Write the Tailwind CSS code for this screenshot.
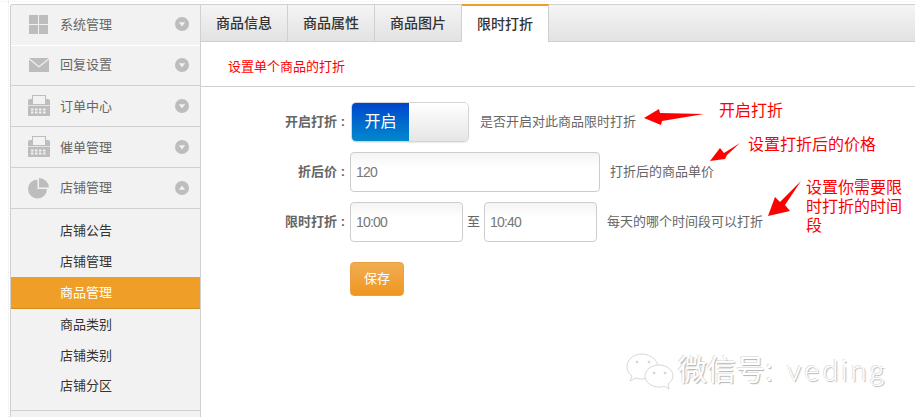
<!DOCTYPE html>
<html lang="zh-CN">
<head>
    <meta charset="UTF-8">
    <title>限时打折</title>
    <script src="https://cdn.jsdelivr.net/npm/@tailwindcss/browser@4"></script>
</head>
<body class="w-[915px] h-[417px] overflow-hidden bg-white font-['Liberation_Sans','Noto_Sans_CJK_SC',sans-serif]">
    <div class="relative flex h-[417px] pl-[10px] pt-[4px]">
        <!-- 背景虚线 -->
        <div class="absolute left-[8px] top-0 bottom-0 border-l border-dotted border-[#eaeaea]"></div>
        <div class="absolute left-0 right-0 top-[1px] border-t border-dotted border-[#eeeeee]"></div>

        <!-- 左侧菜单 -->
        <aside class="relative w-[191px] h-[413px] shrink-0 bg-[#f2f2f2] border border-b-0 border-[#d0d0d0] rounded-tl-[3px] overflow-hidden">
            <div class="flex items-center h-[41px] border-b border-white text-[13px] text-[#666]">
                <div class="w-[49px] pl-[6px] flex justify-center">
                    <svg width="20" height="20" viewBox="0 0 20 20" fill="#bdbdbd"><rect x="0" y="0" width="9" height="9"/><rect x="10" y="0" width="9" height="9"/><rect x="0" y="10" width="9" height="9"/><rect x="10" y="10" width="9" height="9"/></svg>
                </div>
                <span>系统管理</span>
                <svg class="ml-auto mr-[11px] mb-[2px]" width="14" height="14" viewBox="0 0 14 14"><circle cx="7" cy="7" r="7" fill="#bdbdbd"/><path d="M3.8 5.2h6.4L7 9.4z" fill="#f2f2f2"/></svg>
            </div>
            <div class="flex items-center h-[40px] border-b border-[#d0d0d0] text-[13px] text-[#666]">
                <div class="w-[49px] pl-[6px] flex justify-center">
                    <svg class="mb-[2px]" width="20" height="14" viewBox="0 0 20 14" fill="#bdbdbd"><path d="M0 0h20L10 8z"/><path d="M0 1.6l10 8 10-8V14H0z"/></svg>
                </div>
                <span class="pb-[2px]">回复设置</span>
                <svg class="ml-auto mr-[11px] mb-[2px]" width="14" height="14" viewBox="0 0 14 14"><circle cx="7" cy="7" r="7" fill="#bdbdbd"/><path d="M3.8 5.2h6.4L7 9.4z" fill="#f2f2f2"/></svg>
            </div>
            <div class="flex items-center h-[41px] border-b border-[#d0d0d0] text-[13px] text-[#666]">
                <div class="w-[49px] pl-[6px] flex justify-center">
                    <svg class="mb-[1px]" width="22" height="21" viewBox="0 0 22 21"><path d="M0 6a2 2 0 0 1 2-2h18a2 2 0 0 1 2 2v15H0z" fill="#bdbdbd"/><rect x="4.5" y="0.5" width="13" height="9" fill="#f2f2f2" stroke="#bdbdbd"/><rect x="0" y="10" width="22" height="1" fill="#e2e2e2"/><path d="M3 14.5h16M3 17.5h16" stroke="#f2f2f2" stroke-width="2" stroke-dasharray="2.5 1.5"/></svg>
                </div>
                <span class="pt-[2px]">订单中心</span>
                <svg class="ml-auto mr-[11px]" width="14" height="14" viewBox="0 0 14 14"><circle cx="7" cy="7" r="7" fill="#bdbdbd"/><path d="M3.8 5.2h6.4L7 9.4z" fill="#f2f2f2"/></svg>
            </div>
            <div class="flex items-center h-[41px] border-b border-[#d0d0d0] text-[13px] text-[#666]">
                <div class="w-[49px] pl-[6px] flex justify-center">
                    <svg class="mb-[1px]" width="22" height="21" viewBox="0 0 22 21"><path d="M0 6a2 2 0 0 1 2-2h18a2 2 0 0 1 2 2v15H0z" fill="#bdbdbd"/><rect x="4.5" y="0.5" width="13" height="9" fill="#f2f2f2" stroke="#bdbdbd"/><rect x="0" y="10" width="22" height="1" fill="#e2e2e2"/><path d="M3 14.5h16M3 17.5h16" stroke="#f2f2f2" stroke-width="2" stroke-dasharray="2.5 1.5"/></svg>
                </div>
                <span class="pt-[2px]">催单管理</span>
                <svg class="ml-auto mr-[11px]" width="14" height="14" viewBox="0 0 14 14"><circle cx="7" cy="7" r="7" fill="#bdbdbd"/><path d="M3.8 5.2h6.4L7 9.4z" fill="#f2f2f2"/></svg>
            </div>
            <div class="flex items-center h-[41px] border-b border-[#d0d0d0] text-[13px] text-[#666]">
                <div class="w-[49px] pl-[6px] flex justify-center">
                    <svg width="21" height="21" viewBox="0 0 21 21" fill="#bdbdbd"><path d="M9.5 1.5A9.5 9.5 0 1 0 19 11H9.5z"/><path d="M11 0a10 10 0 0 1 10 9.5H11z"/></svg>
                </div>
                <span>店铺管理</span>
                <svg class="ml-auto mr-[11px]" width="14" height="14" viewBox="0 0 14 14"><circle cx="7" cy="7" r="7" fill="#bdbdbd"/><path d="M3.8 8.8h6.4L7 4.6z" fill="#f2f2f2"/></svg>
            </div>

            <!-- 子菜单 -->
            <ul class="pt-[6px] h-[202px] border-b border-[#d0d0d0] text-[13px] text-[#333]">
                <li class="h-[31px] leading-[31px] pl-[49px]">店铺公告</li>
                <li class="h-[31px] leading-[31px] pl-[49px]">店铺管理</li>
                <li class="h-[32px] leading-[31px] pl-[49px] bg-[#ef9f28] border-b border-[#d48a1e] text-white">商品管理</li>
                <li class="h-[31px] leading-[31px] pl-[49px]">商品类别</li>
                <li class="h-[31px] leading-[31px] pl-[49px]">店铺类别</li>
                <li class="h-[31px] leading-[30px] pl-[49px]">店铺分区</li>
            </ul>
        </aside>

        <!-- 右侧内容 -->
        <main class="flex-1 min-w-0 bg-white">
            <nav class="flex h-[38px] border-t border-b border-[#d0d0d0] bg-gradient-to-b from-[#f4f4f4] to-[#e2e2e2] text-[14px] font-medium text-[#333]">
                <div class="w-[87px] flex items-center justify-center border-r border-[#d0d0d0]">商品信息</div>
                <div class="w-[87px] flex items-center justify-center border-r border-[#d0d0d0]">商品属性</div>
                <div class="w-[87px] flex items-center justify-center border-r border-[#d0d0d0]">商品图片</div>
                <div class="w-[87px] h-[38px] -mt-px flex items-center justify-center border-t-2 border-t-[#ef9f28] border-r border-r-[#d0d0d0] bg-white">限时打折</div>
            </nav>
            <div class="h-[45px] pl-[27px] pt-[15px] border-b border-[#d0d0d0] text-[13px] leading-[20px] text-[#f00]">设置单个商品的打折</div>

            <form class="pt-[15px] text-[13px] text-[#666]">
                <div class="flex items-center h-[40px]">
                    <label class="w-[145px] pr-[1px] text-right font-bold">开启打折 :</label>
                    <div class="ml-[5px] flex w-[118px] h-[40px] border border-[#d4d4d4] rounded-[5px] overflow-hidden shadow-[0_1px_1px_rgba(0,0,0,0.08)]">
                        <span class="w-[57px] flex items-center justify-center bg-gradient-to-b from-[#0044cc] to-[#0088cc] text-white text-[16px]">开启</span>
                        <span class="flex-1 bg-gradient-to-b from-white to-[#e6e6e6]"></span>
                    </div>
                    <span class="ml-[11px]">是否开启对此商品限时打折</span>
                </div>
                <div class="flex items-center h-[40px] mt-[10px]">
                    <label class="w-[145px] pr-[1px] text-right font-bold">折后价 :</label>
                    <input class="ml-[4px] w-[250px] h-[40px] px-[5px] border border-[#ccc] rounded-[4px] bg-gradient-to-b from-[#f4f4f4] to-white to-40% text-[14px] tracking-[-0.8px] text-[#777]" value="120">
                    <span class="ml-[10px]">打折后的商品单价</span>
                </div>
                <div class="flex items-center h-[40px] mt-[10px]">
                    <label class="w-[145px] pr-[1px] text-right font-bold">限时打折 :</label>
                    <input class="ml-[4px] w-[113px] h-[40px] px-[5px] border border-[#ccc] rounded-[4px] bg-gradient-to-b from-[#f4f4f4] to-white to-40% text-[14px] tracking-[-0.8px] text-[#777]" value="10:00">
                    <span class="w-[21px] text-center">至</span>
                    <input class="w-[113px] h-[40px] px-[5px] border border-[#ccc] rounded-[4px] bg-gradient-to-b from-[#f4f4f4] to-white to-40% text-[14px] tracking-[-0.8px] text-[#777]" value="10:40">
                    <span class="ml-[10px]">每天的哪个时间段可以打折</span>
                </div>
                <button type="button" class="block ml-[149px] mt-[20px] w-[54px] h-[34px] border border-[#e8a043] rounded-[4px] bg-gradient-to-b from-[#f2ad50] to-[#ef961b] text-white text-[13px]">保存</button>
            </form>
        </main>

        <!-- 红色标注 -->
        <span class="absolute left-[719px] top-[100px] text-[16px] leading-[22px] text-[#f00]">开启打折</span>
        <span class="absolute left-[748px] top-[134px] text-[16px] leading-[22px] text-[#f00]">设置打折后的价格</span>
        <span class="absolute left-[806px] top-[178px] w-[100px] text-[16px] leading-[19px] text-[#f00]">设置你需要限时打折的时间段</span>
        <svg class="absolute left-0 top-0" width="915" height="417" viewBox="0 0 915 417" fill="#f00">
            <path d="M644 118L659 109L660 113L704 114L662 121L661 125z"/>
            <path d="M710 161L720 148L724 153L740 143L727 155L725 159z"/>
            <path d="M768 216L775 197L780 202L801 181L785 205L790 211z"/>
        </svg>

        <!-- 水印 -->
        <svg class="absolute left-[625px] top-[352px]" width="56" height="40" viewBox="0 0 56 40" fill="white" stroke="#d8d8d8" stroke-width="1">
            <path d="M17 2C8 2 2 8 2 15c0 4 2 7 5 9l-2 5 6-3c2 .6 4 1 6 1 9 0 16-6 16-12S26 2 17 2z"/>
            <path d="M34 13c-8 0-14 5-14 11s6 11 14 11c2 0 3 0 5-1l5 3-1-5c3-2 5-5 5-8 0-6-6-11-14-11z"/>
            <circle cx="12" cy="10" r="1" fill="#ccc"/><circle cx="24" cy="10" r="1" fill="#ccc"/><circle cx="29" cy="21" r="1" fill="#ccc"/><circle cx="40" cy="21" r="1" fill="#ccc"/>
        </svg>
        <span class="absolute left-[678px] top-[350px] text-[29px] leading-[40px] whitespace-nowrap text-white [text-shadow:1px_1px_1px_#b4b4b4,-1px_-1px_0_#e4e4e4]">微信号:<span class="ml-[14px] font-['Lato'] font-light tracking-[3px]">veding</span></span>
    </div>
</body>
</html>
